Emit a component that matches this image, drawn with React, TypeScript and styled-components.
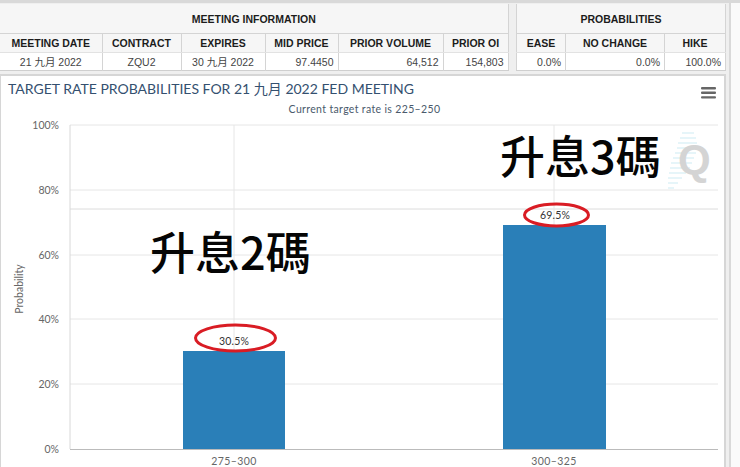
import React from "react";
import styled, { createGlobalStyle } from "styled-components";

const GlobalStyle = createGlobalStyle`
  html, body { margin: 0; padding: 0; background: #fff; }
  body { width: 740px; height: 467px; overflow: hidden; font-family: "Liberation Sans", Arial, sans-serif; }
`;

const CJK = `"Liberation Sans", "Noto Sans CJK TC", sans-serif`;

const meetingCols = [102, 79, 84, 73, 105, 65];
const probCols = [49, 99, 61];
const ticks = [
  { label: "100%", y: 49 },
  { label: "80%", y: 114 },
  { label: "60%", y: 179 },
  { label: "40%", y: 243 },
  { label: "20%", y: 308 },
  { label: "0%", y: 373 },
];
const stripes = [
  [680, 692, 57], [678, 694, 62], [676, 695, 67], [675, 695, 72], [673, 694, 77],
  [671, 692, 82], [669, 690, 87], [668, 688, 92], [667, 684, 97], [666, 680, 102],
  [666, 676, 107], [666, 672, 112],
];

export default function App() {
  return (
    <Page>
      <GlobalStyle />
      <Main>
        <Tables>
          <InfoTable $width={508}>
            <colgroup>
              {meetingCols.map((w, i) => <col key={i} width={w} />)}
            </colgroup>
            <tbody>
              <tr><GroupHead colSpan={6}>MEETING INFORMATION</GroupHead></tr>
              <tr>
                <ColHead>MEETING DATE</ColHead>
                <ColHead>CONTRACT</ColHead>
                <ColHead>EXPIRES</ColHead>
                <ColHead>MID PRICE</ColHead>
                <ColHead>PRIOR VOLUME</ColHead>
                <ColHead>PRIOR OI</ColHead>
              </tr>
              <tr>
                <Cell>21 九月 2022</Cell>
                <Cell>ZQU2</Cell>
                <Cell>30 九月 2022</Cell>
                <Cell $right>97.4450</Cell>
                <Cell $right>64,512</Cell>
                <Cell $right>154,803</Cell>
              </tr>
            </tbody>
          </InfoTable>
          <InfoTable $width={209}>
            <colgroup>
              {probCols.map((w, i) => <col key={i} width={w} />)}
            </colgroup>
            <tbody>
              <tr><GroupHead colSpan={3}>PROBABILITIES</GroupHead></tr>
              <tr>
                <ColHead>EASE</ColHead>
                <ColHead>NO CHANGE</ColHead>
                <ColHead>HIKE</ColHead>
              </tr>
              <tr>
                <Cell $right>0.0%</Cell>
                <Cell $right>0.0%</Cell>
                <Cell $right>100.0%</Cell>
              </tr>
            </tbody>
          </InfoTable>
        </Tables>
        <ChartPanel>
          <ChartTitle>TARGET RATE PROBABILITIES FOR 21 九月 2022 FED MEETING</ChartTitle>
          <ChartSubtitle>Current target rate is 225–250</ChartSubtitle>
          <MenuIcon viewBox="0 0 15 12">
            <rect x="0" y="0" width="15" height="2.4" rx="1" />
            <rect x="0" y="4.6" width="15" height="2.4" rx="1" />
            <rect x="0" y="9.2" width="15" height="2.4" rx="1" />
          </MenuIcon>
          <Plot viewBox="0 0 724 393" width="724" height="393">
            {ticks.map((t) => (
              <g key={t.label}>
                {t.label !== "0%" && (
                  <line x1="68" x2="716" y1={t.y} y2={t.y} stroke="#e6e6e6" />
                )}
                <AxisText x="57" y={t.y + 3.5} textAnchor="end">{t.label}</AxisText>
              </g>
            ))}
            <line x1="68" x2="716" y1="133" y2="133" stroke="#dcdcdc" />
            <line x1="68" x2="68" y1="49" y2="373" stroke="#d8d8d8" />
            <line x1="232" x2="232" y1="49" y2="373" stroke="#e6e6e6" />
            <line x1="552" x2="552" y1="49" y2="373" stroke="#e6e6e6" />
            <rect x="181" y="275" width="102" height="98" fill="#2a7fb8" />
            <rect x="501" y="149" width="103" height="224" fill="#2a7fb8" />
            <line x1="68" x2="716" y1="373.500" y2="373.500" stroke="#bbb" />
            <CategoryText x="232" y="389" textAnchor="middle">275–300</CategoryText>
            <CategoryText x="552" y="389" textAnchor="middle">300–325</CategoryText>
            <ValueText x="232" y="269" textAnchor="middle">30.5%</ValueText>
            <ValueText x="553" y="142.500" textAnchor="middle">69.5%</ValueText>
            <ellipse cx="233.500" cy="262" rx="40" ry="13" fill="none" stroke="#d91c24" strokeWidth="3" />
            <ellipse cx="554.500" cy="139" rx="32" ry="11" fill="none" stroke="#d91c24" strokeWidth="3" />
            <AxisText transform="translate(21 213) rotate(-90)" textAnchor="middle">Probability</AxisText>
            <g stroke="#d5eef5" strokeWidth="1.2">
              {stripes.map(([a, b, y]) => <line key={y} x1={a} x2={b} y1={y} y2={y} />)}
            </g>
          </Plot>
          <Watermark>Q</Watermark>
          <Annotation $left={149} $top={147}>升息2碼</Annotation>
          <Annotation $left={499} $top={51}>升息3碼</Annotation>
        </ChartPanel>
      </Main>
      <ScrollGutter />
    </Page>
  );
}

const Page = styled.div`
  display: flex;
  width: 740px;
  height: 467px;
  background: #efefef;
  border-top: 3px solid #d9d9d9;
  box-sizing: border-box;
  overflow: hidden;
`;

const Main = styled.div`
  width: 727px;
  display: flex;
  flex-direction: column;
  gap: 3px;
`;

const ScrollGutter = styled.div`
  width: 13px;
  margin-left: 3px;
  background: #fafafa;
  border-left: 2px solid #d9d9d9;
`;

const Tables = styled.div`
  display: flex;
  justify-content: space-between;
  padding-top: 1px;
`;

const InfoTable = styled.table<{ $width: number }>`
  width: ${(p) => p.$width}px;
  table-layout: fixed;
  border-collapse: collapse;
  background: #fff;
  color: #1c1c1c;
  font-family: ${CJK};
  border-bottom: 1px solid #cfcfcf;
  border-right: 1px solid #d4d4d4;
  & + & { border-left: 1px solid #d4d4d4; }
`;

const GroupHead = styled.th`
  height: 29px;
  padding: 0;
  background: #f6f6f6;
  font-size: 10.500px;
  font-weight: 700;
  border-bottom: 1px solid #d4d4d4;
`;

const ColHead = styled.th`
  height: 18px;
  padding: 0;
  background: #f6f6f6;
  font-size: 10.500px;
  font-weight: 700;
  border-right: 1px solid #d4d4d4;
  border-bottom: 1px solid #e2e2e2;
  &:last-child { border-right: none; }
`;

const Cell = styled.td<{ $right?: boolean }>`
  height: 17px;
  padding: 0 4px;
  font-size: 10.500px;
  color: #444;
  text-align: ${(p) => (p.$right ? "right" : "center")};
  border-right: 1px solid #d4d4d4;
  white-space: nowrap;
  &:last-child { border-right: none; }
`;

const ChartPanel = styled.div`
  position: relative;
  width: 726px;
  flex: 1;
  box-sizing: border-box;
  background: #fff;
  border: 2px solid #d6d6d6;
  border-bottom: none;
  border-left-width: 1px;
`;

const ChartTitle = styled.div`
  padding: 4px 0 0 7px;
  font-family: Lato, "Noto Sans CJK TC", sans-serif;
  font-size: 14px;
  line-height: 18px;
  color: #34506f;
  white-space: nowrap;
`;

const ChartSubtitle = styled.div`
  margin-top: 5px;
  padding-left: 4px;
  text-align: center;
  font-family: Lato, sans-serif;
  font-size: 10.500px;
  letter-spacing: 0.35px;
  line-height: 13px;
  color: #4a5a6c;
`;

const MenuIcon = styled.svg`
  position: absolute;
  top: 11px;
  right: 8px;
  width: 15px;
  height: 12px;
  fill: #666;
`;

const Plot = styled.svg`
  position: absolute;
  left: 1px;
  top: 0;
`;

const AxisText = styled.text`
  font-family: Lato, sans-serif;
  font-size: 10.500px;
  fill: #666;
`;

const CategoryText = styled(AxisText)`
  letter-spacing: 0.4px;
`;

const ValueText = styled.text`
  font-family: Lato, sans-serif;
  font-size: 10.500px;
  letter-spacing: 0.2px;
  fill: #333;
`;

const Watermark = styled.div`
  position: absolute;
  left: 677px;
  top: 59px;
  font-family: "Liberation Sans", sans-serif;
  font-weight: 700;
  font-size: 42px;
  line-height: 50px;
  color: #d4d4d4;
`;

const Annotation = styled.div<{ $left: number; $top: number }>`
  position: absolute;
  left: ${(p) => p.$left}px;
  top: ${(p) => p.$top}px;
  font-family: "Noto Sans CJK TC", sans-serif;
  font-size: 45px;
  line-height: 56px;
  font-weight: 500;
  color: #050505;
  white-space: nowrap;
`;
